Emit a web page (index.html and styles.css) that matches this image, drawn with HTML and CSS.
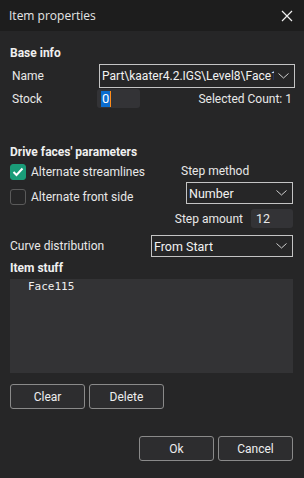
FILE: index.html
```html
<!DOCTYPE html>
<html lang="en">
<head>
    <meta charset="UTF-8">
    <title>Item properties</title>
    <link rel="stylesheet" href="styles.css">
</head>
<body>
    <div class="window">
        <div class="titlebar">
            <span class="title">Item properties</span>
            <svg class="close" width="12" height="12" viewBox="0 0 12 12">
                <path d="M1 1 L11 11 M11 1 L1 11" stroke="#f0f0f0" stroke-width="1.2" fill="none"/>
            </svg>
        </div>

        <div class="content">
            <div class="heading first">Base info</div>

            <div class="row name-row">
                <span class="label">Name</span>
                <div class="combo name-combo">
                    <span class="combo-text">Part\kaater4.2.IGS\Level8\Face115</span>
                    <svg class="chevron" width="11" height="6" viewBox="0 0 11 6"><polyline points="0.5,0.5 5.5,5 10.5,0.5" stroke="#cfcfcf" fill="none"/></svg>
                </div>
            </div>

            <div class="row stock-row">
                <span class="label">Stock</span>
                <div class="field stock-field"><span class="sel">0</span><span class="caret"></span></div>
                <span class="count">Selected Count: 1</span>
            </div>

            <div class="heading drive">Drive faces' parameters</div>

            <div class="params">
                <div class="checks">
                    <label class="check">
                        <span class="box checked">
                            <svg width="12" height="10" viewBox="0 0 12 10"><polyline points="1.5,5 4.5,8 10.5,1.5" stroke="#fff" stroke-width="2" fill="none"/></svg>
                        </span>
                        Alternate streamlines
                    </label>
                    <label class="check">
                        <span class="box"></span>
                        Alternate front side
                    </label>
                </div>
                <div class="step">
                    <span class="step-label">Step method</span>
                    <div class="combo step-combo">
                        <span class="combo-text">Number</span>
                        <svg class="chevron" width="11" height="6" viewBox="0 0 11 6"><polyline points="0.5,0.5 5.5,5 10.5,0.5" stroke="#cfcfcf" fill="none"/></svg>
                    </div>
                    <div class="amount">
                        <span class="amount-label">Step amount</span>
                        <div class="field amount-field">12</div>
                    </div>
                </div>
            </div>

            <div class="row curve-row">
                <span class="label">Curve distribution</span>
                <div class="combo curve-combo">
                    <span class="combo-text">From Start</span>
                    <svg class="chevron" width="11" height="6" viewBox="0 0 11 6"><polyline points="0.5,0.5 5.5,5 10.5,0.5" stroke="#cfcfcf" fill="none"/></svg>
                </div>
            </div>

            <div class="heading stuff">Item stuff</div>
            <div class="list">
                <div class="list-item">Face115</div>
            </div>

            <div class="buttons">
                <button>Clear</button>
                <button>Delete</button>
            </div>

            <div class="buttons dialog-buttons">
                <button>Ok</button>
                <button>Cancel</button>
            </div>
        </div>
    </div>
</body>
</html>
```

FILE: styles.css
```css
html, body {
    margin: 0;
    padding: 0;
}
body {
    width: 304px;
    height: 478px;
    background-color: #262627;
    font-family: Roboto, "Liberation Sans", sans-serif;
    font-size: 12px;
    color: #e8e8e8;
    overflow: hidden;
}
.window {
    height: 478px;
    background-color: #262627;
}
.titlebar {
    height: 31px;
    background-color: #1d1d1d;
    display: flex;
    align-items: center;
    justify-content: space-between;
    padding: 0 11px 0 9px;
}
.title {
    font-family: "Open Sans", sans-serif;
    font-size: 12px;
    color: #e6e6e6;
}
.close {
    display: block;
}
.content {
    padding: 0 11px 0 10px;
}
.heading {
    font-weight: bold;
    line-height: 16px;
    color: #f0f0f0;
}
.heading.first {
    padding-top: 14px;
}
.row {
    display: flex;
    align-items: center;
}
.label {
    line-height: 16px;
    white-space: nowrap;
}
.name-row {
    margin-top: 3px;
}
.name-row .label,
.stock-row .label {
    margin-left: 2px;
    width: 87px;
}
.combo {
    display: flex;
    align-items: center;
    justify-content: space-between;
    border: 1px solid #c4c4c4;
    box-sizing: border-box;
    padding: 0 5px 0 2px;
    overflow: hidden;
}
.combo-text {
    white-space: nowrap;
    overflow: hidden;
    font-size: 12.5px;
    color: #f2f2f2;
}
.chevron {
    flex: none;
    margin-left: 4px;
}
.name-combo {
    flex: 1;
    height: 24px;
    margin-right: -2px;
}
.name-combo .combo-text {
    flex: 1;
    font-size: 12px;
}
.stock-row {
    height: 19px;
    margin-top: 1px;
}
.field {
    background-color: #333336;
    border-radius: 3px;
    box-sizing: border-box;
    height: 19px;
}
.stock-field {
    width: 43px;
    margin-left: -2px;
    display: flex;
    align-items: center;
    padding-left: 4px;
}
.sel {
    background-color: #0a6ccf;
    color: #fff;
    font-size: 13px;
    line-height: 16px;
    padding: 0 1px;
}
.caret {
    width: 1px;
    height: 16px;
    background-color: #ff8c1a;
}
.count {
    margin-left: auto;
    margin-right: 1px;
}
.heading.drive {
    margin-top: 36px;
}
.params {
    display: flex;
    justify-content: space-between;
}
.checks {
    display: flex;
    flex-direction: column;
    gap: 9px;
    padding-top: 4px;
}
.check {
    display: flex;
    align-items: center;
    gap: 5px;
    line-height: 16px;
    white-space: nowrap;
}
.box {
    width: 16px;
    height: 16px;
    box-sizing: border-box;
    border: 1px solid #5a5a5a;
    border-radius: 3px;
    display: flex;
    align-items: center;
    justify-content: center;
}
.box.checked {
    background-color: #1a9c78;
    border-color: #1a9c78;
}
.step {
    display: flex;
    flex-direction: column;
    align-items: flex-end;
    width: 117px;
    flex: none;
    padding-top: 3px;
}
.step-label {
    align-self: flex-start;
    margin-left: 5px;
    line-height: 16px;
}
.step-combo {
    width: 107px;
    height: 22px;
    margin-top: 3px;
}
.amount {
    display: flex;
    align-items: center;
    gap: 8px;
    margin-top: 5px;
}
.amount-label {
    white-space: nowrap;
}
.amount-field {
    width: 42px;
    flex: none;
    padding-left: 5px;
    line-height: 19px;
    font-size: 12.5px;
}
.curve-row {
    margin-top: 7px;
    justify-content: space-between;
}
.curve-combo {
    width: 142px;
    height: 22px;
}
.heading.stuff {
    margin-top: 3px;
}
.list {
    margin-top: 3px;
    height: 94px;
    background-color: #333335;
}
.list-item {
    padding: 1px 0 0 18px;
    font-family: "DejaVu Sans Mono", monospace;
    font-size: 11px;
    line-height: 14px;
    color: #f0f0f0;
}
.buttons {
    display: flex;
    gap: 4px;
    margin-top: 11px;
}
.dialog-buttons {
    justify-content: flex-end;
    margin-top: 27px;
}
button {
    width: 75px;
    height: 25px;
    background-color: #2d2d2f;
    color: #eeeeee;
    border: 1px solid #8a8a8a;
    border-radius: 3px;
    font-family: Roboto, "Liberation Sans", sans-serif;
    font-size: 12px;
    padding: 0;
}
```
